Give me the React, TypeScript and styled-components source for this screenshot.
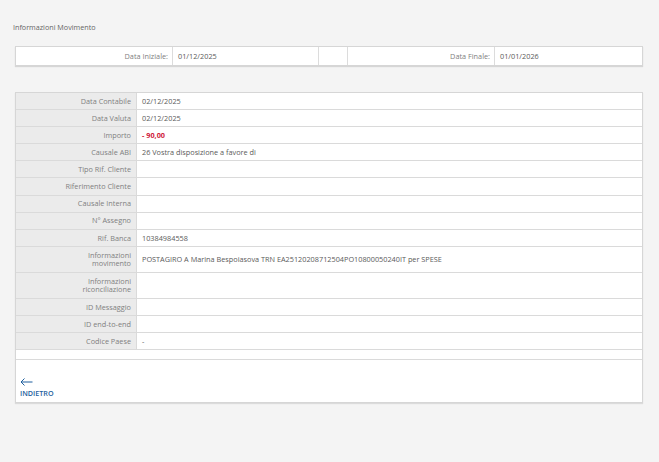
import React from "react";
import styled, { createGlobalStyle } from "styled-components";

const GlobalStyle = createGlobalStyle`
  html, body {
    margin: 0;
    padding: 0;
    background: #f4f4f4;
    font-family: "Open Sans", "Liberation Sans", sans-serif;
  }
`;

/**
 * Page container.
 */
const Page = styled.div`
  width: 659px;
  height: 462px;
  box-sizing: border-box;
  padding: 22px 16px 0 15px;
`;

const Title = styled.div`
  font-size: 7.2px;
  color: #666;
  margin-left: -2px;
  height: 10px;
  line-height: 10px;
`;

/**
 * Date filter bar.
 */
const FilterBar = styled.div`
  margin-top: 14px;
  display: grid;
  grid-template-columns: 156px 146px 29px 147px 1fr;
  height: 18px;
  background: #fff;
  border: 1px solid #d6d6d6;
  box-shadow: 0 1px 1px rgba(0, 0, 0, 0.12);
`;

interface CellProps {
  right?: boolean;
}

const FilterCell = styled.div<CellProps>`
  display: flex;
  align-items: center;
  justify-content: ${(p) => (p.right ? "flex-end" : "flex-start")};
  padding: 0 4px 0 5px;
  font-size: 7.3px;
  color: ${(p) => (p.right ? "#808080" : "#5a5a5a")};
  border-left: 1px solid #dcdcdc;

  &:first-child {
    border-left: none;
  }
`;

/**
 * Detail table.
 */
const Table = styled.div`
  margin-top: 26px;
  background: #fff;
  border: 1px solid #d6d6d6;
  box-shadow: 0 1px 1px rgba(0, 0, 0, 0.1);
`;

interface RowProps {
  tall?: boolean;
}

const Row = styled.div<RowProps>`
  display: grid;
  grid-template-columns: 121px 1fr;
  height: ${(p) => (p.tall ? 25 : 16.1)}px;
  border-bottom: 1px solid #dadada;
`;

const Label = styled.div`
  background: #ebebeb;
  border-right: 1px solid #dadada;
  display: flex;
  align-items: center;
  justify-content: flex-end;
  text-align: right;
  padding-right: 5px;
  font-size: 7.3px;
  line-height: 8.5px;
  color: #808080;
`;

interface ValueProps {
  negative?: boolean;
}

const Value = styled.div<ValueProps>`
  display: flex;
  align-items: center;
  padding-left: 5px;
  font-size: 7.3px;
  color: ${(p) => (p.negative ? "#d0203a" : "#5a5a5a")};
  font-weight: ${(p) => (p.negative ? 700 : 400)};
  white-space: nowrap;
`;

const Spacer = styled.div`
  height: 9px;
  border-bottom: 1px solid #dadada;
`;

const Footer = styled.div`
  box-sizing: border-box;
  height: 42px;
  display: flex;
  flex-direction: column;
  justify-content: flex-end;
  padding: 0 0 4px 4px;
`;

const BackLink = styled.a`
  display: flex;
  flex-direction: column;
  align-items: flex-start;
  gap: 2px;
  color: #1f5f9e;
  font-size: 7.2px;
  font-weight: 600;
  text-decoration: none;
`;

const rows: { label: string; value?: string; tall?: boolean; negative?: boolean }[] = [
  { label: "Data Contabile", value: "02/12/2025" },
  { label: "Data Valuta", value: "02/12/2025" },
  { label: "Importo", value: "- 90,00", negative: true },
  { label: "Causale ABI", value: "26 Vostra disposizione a favore di" },
  { label: "Tipo Rif. Cliente" },
  { label: "Riferimento Cliente" },
  { label: "Causale Interna" },
  { label: "N° Assegno" },
  { label: "Rif. Banca", value: "10384984558" },
  {
    label: "Informazioni movimento",
    value: "POSTAGIRO A Marina Bespoiasova TRN EA25120208712504PO10800050240IT per SPESE",
    tall: true,
  },
  { label: "Informazioni riconciliazione", tall: true },
  { label: "ID Messaggio" },
  { label: "ID end-to-end" },
  { label: "Codice Paese", value: "-" },
];

const App: React.FC = () => (
  <>
    <GlobalStyle />
    <Page>
      <Title>Informazioni Movimento</Title>
      <FilterBar>
        <FilterCell right>Data Iniziale:</FilterCell>
        <FilterCell>01/12/2025</FilterCell>
        <FilterCell />
        <FilterCell right>Data Finale:</FilterCell>
        <FilterCell>01/01/2026</FilterCell>
      </FilterBar>
      <Table>
        {rows.map((r) => (
          <Row key={r.label} tall={r.tall}>
            <Label>
              {r.tall ? (
                <span>
                  {r.label.split(" ")[0]}
                  <br />
                  {r.label.split(" ")[1]}
                </span>
              ) : (
                r.label
              )}
            </Label>
            <Value negative={r.negative}>{r.value}</Value>
          </Row>
        ))}
        <Spacer />
        <Footer>
          <BackLink href="#">
            <svg width="13" height="8" viewBox="0 0 13 8" fill="none" stroke="#1f5f9e" strokeWidth="1">
              <path d="M12.5 4H1M4.5 0.5L1 4l3.5 3.5" />
            </svg>
            INDIETRO
          </BackLink>
        </Footer>
      </Table>
    </Page>
  </>
);

export default App;
